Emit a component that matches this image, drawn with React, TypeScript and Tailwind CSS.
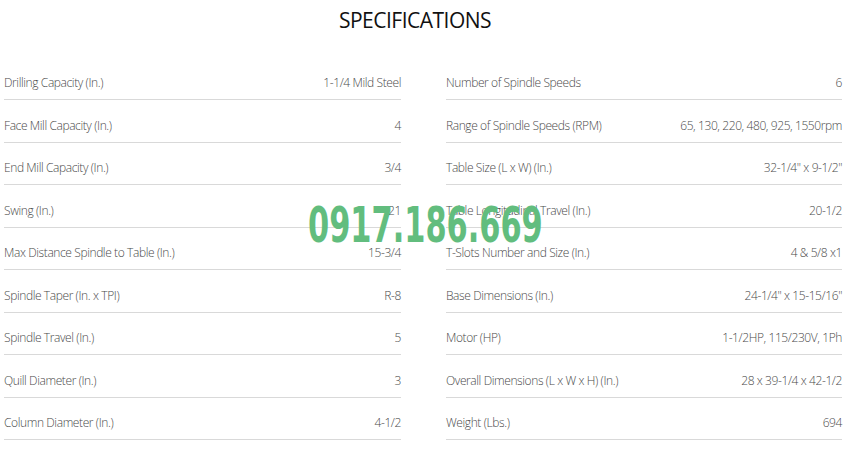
const left: [string, string][] = [
  ["Drilling Capacity (In.)", "1-1/4 Mild Steel"],
  ["Face Mill Capacity (In.)", "4"],
  ["End Mill Capacity (In.)", "3/4"],
  ["Swing (In.)", "21"],
  ["Max Distance Spindle to Table (In.)", "15-3/4"],
  ["Spindle Taper (In. x TPI)", "R-8"],
  ["Spindle Travel (In.)", "5"],
  ["Quill Diameter (In.)", "3"],
  ["Column Diameter (In.)", "4-1/2"],
];

const right: [string, string][] = [
  ["Number of Spindle Speeds", "6"],
  ["Range of Spindle Speeds (RPM)", "65, 130, 220, 480, 925, 1550rpm"],
  ["Table Size (L x W) (In.)", "32-1/4\" x 9-1/2\""],
  ["Table Longitudinal Travel (In.)", "20-1/2"],
  ["T-Slots Number and Size (In.)", "4 & 5/8 x1"],
  ["Base Dimensions (In.)", "24-1/4\" x 15-15/16\""],
  ["Motor (HP)", "1-1/2HP, 115/230V, 1Ph"],
  ["Overall Dimensions (L x W x H) (In.)", "28 x 39-1/4 x 42-1/2"],
  ["Weight (Lbs.)", "694"],
];

function SpecColumn({ rows }: { rows: [string, string][] }) {
  return (
    <div className="flex flex-col">
      {rows.map(([label, value]) => (
        <div
          key={label}
          className="h-[42.5px] flex items-end justify-between pb-[7px] border-b border-[#d9d9d9]"
        >
          <span>{label}</span>
          <span>{value}</span>
        </div>
      ))}
    </div>
  );
}

export default function App() {
  return (
    <div className="relative w-[850px] h-[450px] bg-white overflow-hidden font-['Open_Sans',sans-serif]">
      <h1 className="pt-[8px] pr-[20px] text-center text-[21px] leading-[24px] font-medium tracking-[-0.5px] text-[#111]">
        SPECIFICATIONS
      </h1>

      <div className="mt-[25.5px] grid grid-cols-[397px_396px] gap-x-[45px] pl-[4px] text-[12px] font-light tracking-[-0.4px] text-[#4a4a4a]">
        <SpecColumn rows={left} />
        <SpecColumn rows={right} />
      </div>

      {/* phone watermark over the table */}
      <div className="absolute left-[308px] top-[200px] text-[#62bd7e] text-[49px] leading-[52px] font-bold font-['DejaVu_Sans_Condensed',sans-serif] tracking-[0px] origin-left scale-x-[0.69]">
        0917.186.669
      </div>
    </div>
  );
}
